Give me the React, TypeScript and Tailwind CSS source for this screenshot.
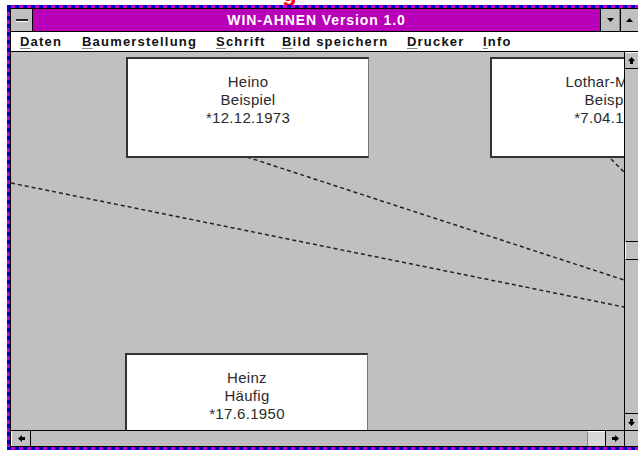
import React from 'react';

const menuItems = [
  { first: 'D', rest: 'aten', w: 'w-[62px]' },
  { first: 'B', rest: 'aumerstellung', w: 'w-[134px]' },
  { first: 'S', rest: 'chrift', w: 'w-[66px]' },
  { first: 'B', rest: 'ild speichern', w: 'w-[125px]' },
  { first: 'D', rest: 'rucker', w: 'w-[76px]' },
  { first: 'I', rest: 'nfo', w: 'w-[60px]' },
];

const ArrowUp = () => (
  <svg width="9" height="9" viewBox="0 0 9 9">
    <path d="M4.5 1 L8 5 L6 5 L6 8 L3 8 L3 5 L1 5 Z" fill="#000" />
  </svg>
);

const ArrowDown = () => (
  <svg width="9" height="9" viewBox="0 0 9 9">
    <path d="M4.5 8 L8 4 L6 4 L6 1 L3 1 L3 4 L1 4 Z" fill="#000" />
  </svg>
);

const ArrowLeft = () => (
  <svg width="9" height="9" viewBox="0 0 9 9">
    <path d="M1 4.5 L5 1 L5 3 L8 3 L8 6 L5 6 L5 8 Z" fill="#000" />
  </svg>
);

const ArrowRight = () => (
  <svg width="9" height="9" viewBox="0 0 9 9">
    <path d="M8 4.5 L4 1 L4 3 L1 3 L1 6 L4 6 L4 8 Z" fill="#000" />
  </svg>
);

// one person box on the tree canvas
const PersonBox = ({ lines, pos }: { lines: string[]; pos: string }) => (
  <div
    className={`absolute ${pos} w-[243px] h-[101px] bg-white border-l-2 border-t-2 border-b-2 border-r border-l-[#333] border-t-[#333] border-b-[#333] border-r-[#777] flex flex-col items-center pt-[14px] text-[15px] leading-[18px] tracking-[0.3px] text-[#2a2a2a]`}
  >
    {lines.map((l) => (
      <span key={l} className="whitespace-nowrap">{l}</span>
    ))}
  </div>
);

export default function App() {
  return (
    <div className="w-[638px] h-[450px] bg-white overflow-hidden flex flex-col font-['Liberation_Sans',Arial,sans-serif]">
      {/* clipped heading above the window */}
      <div className="h-[5px] overflow-hidden flex pl-[282px]">
        <span className="text-[#ff0000] font-bold text-[24px] leading-[24px] -mt-[19px]">g</span>
      </div>

      <div className="flex flex-1">
        <div className="w-[7px]" />
        <div className="flex-1 flex flex-col">
          <div className="h-[3px] bg-[repeating-linear-gradient(90deg,#0000c8_0_4px,#c000c0_4px_8px)]" />
          <div className="flex flex-1">
            <div className="w-[3px] bg-[repeating-linear-gradient(180deg,#0000c8_0_4px,#c000c0_4px_8px)]" />

            {/* window */}
            <div className="flex-1 flex flex-col border-l border-t border-black bg-white">
              {/* title bar */}
              <div className="h-[23px] flex bg-[#b800b8] border-b border-black">
                <div className="w-[22px] h-[22px] bg-[#c0c0c0] border-r border-black flex items-center justify-center">
                  <div className="w-[12px] h-[3px] bg-[#222] border-b border-white" />
                </div>
                <div className="flex-1 flex items-center justify-center text-white font-bold text-[14px] tracking-[0.9px]">
                  WIN-AHNEN Version 1.0
                </div>
                <div className="w-[20px] h-[22px] bg-[#c0c0c0] border-l border-black border-r border-r-[#808080] flex items-center justify-center">
                  <svg width="9" height="6" viewBox="0 0 9 6">
                    <path d="M1 1 L8 1 L4.5 5 Z" fill="#000" />
                  </svg>
                </div>
                <div className="w-[18px] h-[22px] bg-[#c0c0c0] border-l border-black flex items-center justify-center">
                  <svg width="9" height="6" viewBox="0 0 9 6">
                    <path d="M1 5 L8 5 L4.5 1 Z" fill="#000" />
                  </svg>
                </div>
              </div>

              {/* menu bar */}
              <div className="h-[20px] flex items-center pl-[9px] border-b border-black text-[13px] font-bold text-[#111] tracking-[1.2px]">
                {menuItems.map((m) => (
                  <div key={m.rest} className={`${m.w} whitespace-nowrap`}>
                    <span className="underline decoration-[#888] underline-offset-2">{m.first}</span>
                    {m.rest}
                  </div>
                ))}
              </div>

              {/* client area + vertical scrollbar */}
              <div className="flex h-[378px]">
                <div className="relative flex-1 bg-[#c0c0c0] overflow-hidden">
                  <svg className="absolute inset-0" width="613" height="378">
                    <g stroke="#222" strokeWidth="1.5" strokeDasharray="4 3" fill="none">
                      <line x1="236" y1="105" x2="613" y2="228" />
                      <line x1="0" y1="131" x2="613" y2="255" />
                      <line x1="600" y1="107" x2="614" y2="121" />
                    </g>
                  </svg>
                  <PersonBox pos="left-[115px] top-[5px]" lines={['Heino', 'Beispiel', '*12.12.1973']} />
                  <PersonBox pos="left-[479px] top-[5px]" lines={['Lothar-Martin', 'Beispiel', '*7.04.1945']} />
                  <PersonBox pos="left-[114px] top-[301px]" lines={['Heinz', 'Häufig', '*17.6.1950']} />
                </div>
                <div className="w-[14px] bg-[#c0c0c0] border-l border-black flex flex-col">
                  <div className="h-[17px] border-b border-black bg-[#c0c0c0] flex items-center justify-center border-t border-t-white">
                    <ArrowUp />
                  </div>
                  <div className="h-[172px]" />
                  <div className="h-[19px] border-y border-black bg-[#c0c0c0] border-l border-l-white" />
                  <div className="flex-1" />
                  <div className="h-[17px] border-t border-black flex items-center justify-center">
                    <ArrowDown />
                  </div>
                </div>
              </div>

              {/* horizontal scrollbar */}
              <div className="h-[17px] flex border-y border-black bg-[#c0c0c0]">
                <div className="w-[20px] border-r border-black flex items-center justify-center border-l border-l-white">
                  <ArrowLeft />
                </div>
                <div className="flex-1" />
                <div className="w-[18px] border-l border-[#888] bg-[#d8d8d8] border-t border-t-white" />
                <div className="w-[19px] border-l border-black flex items-center justify-center">
                  <ArrowRight />
                </div>
                <div className="w-[14px] border-l border-black bg-[#c0c0c0]" />
              </div>
            </div>
          </div>
          <div className="h-[3px] bg-[repeating-linear-gradient(90deg,#0000c8_0_4px,#c000c0_4px_8px)]" />
        </div>
      </div>
    </div>
  );
}
